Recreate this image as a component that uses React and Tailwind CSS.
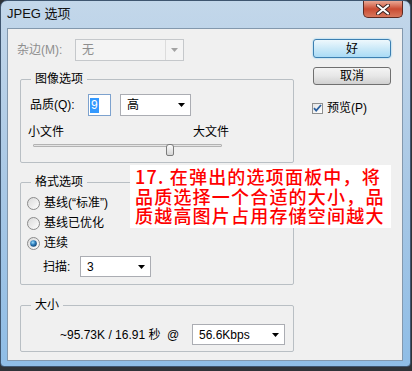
import React from 'react';

const ui = { fontFamily: '"Liberation Sans", "Noto Sans CJK SC", sans-serif' };
const cjk = { fontFamily: '"Noto Sans CJK SC", sans-serif' };

const Arrow = ({ disabled }) => (
  <svg width="7" height="4" viewBox="0 0 7 4">
    <path d="M0 0h7L3.5 4z" fill={disabled ? '#a3a3a3' : '#000'} />
  </svg>
);

// Vista style dropdown box
const Combo = ({ value, className = '', disabled }) => (
  <div
    className={`flex items-center h-full border ${
      disabled ? 'border-[#c5c8cb] bg-[#f4f4f4] text-[#8e8e8e]' : 'border-[#abadb3] bg-white text-black'
    } ${className}`}
  >
    <span className="flex-1 pl-[6px]">{value}</span>
    {disabled && <div className="h-full w-px bg-[#dcdcdc]" />}
    <div className="w-[17px] h-full flex items-center justify-center">
      <Arrow disabled={disabled} />
    </div>
  </div>
);

const Group = ({ title, className = '', children }) => (
  <div className={`border border-[#b9bfc4] rounded-[2px] ${className}`}>
    <div className="-mt-[9px] ml-[10px] w-fit px-[4px] bg-[#f0f0f0] leading-[16px]">{title}</div>
    {children}
  </div>
);

const Radio = ({ checked }) => (
  <svg width="13" height="13" viewBox="0 0 13 13">
    <defs>
      <linearGradient id="rbg" x1="0" y1="0" x2="1" y2="1">
        <stop offset="0" stopColor="#d8d8d8" />
        <stop offset="1" stopColor="#ffffff" />
      </linearGradient>
      <radialGradient id="rdot" cx="0.4" cy="0.35" r="0.7">
        <stop offset="0" stopColor="#9fe0ff" />
        <stop offset="0.5" stopColor="#2d7dbb" />
        <stop offset="1" stopColor="#10406e" />
      </radialGradient>
    </defs>
    <circle cx="6.5" cy="6.5" r="6" fill="url(#rbg)" stroke="#8b8b8b" strokeWidth="1" />
    {checked && <circle cx="6.5" cy="6.5" r="3.3" fill="url(#rdot)" />}
  </svg>
);

const RadioRow = ({ label, checked }) => (
  <div className="flex items-center h-[20px] pl-[6px] gap-[4px]">
    <Radio checked={checked} />
    <span>{label}</span>
  </div>
);

export default function App() {
  return (
    <div className="relative w-[412px] h-[371px] bg-[#2f3338] overflow-hidden text-[12px] text-black" style={ui}>
      <div className="w-[411px] h-[367px] flex flex-col border border-[#3f5670] rounded-t-[7px] rounded-b-[4px] bg-gradient-to-b from-[#c3d7ea] via-[#a9c8e5] to-[#8fbde6]">
        {/* title bar */}
        <div className="flex justify-between h-[27px]">
          <span className="pl-[6px] leading-[26px] text-[13px] text-[#111]">JPEG 选项</span>
          <div className="mr-[7px] w-[40px] h-[17px] rounded-b-[5px] border border-t-0 border-[#5c2a22] bg-gradient-to-b from-[#e9a895] via-[#c94b32] to-[#d8775c] flex items-center justify-center">
            <svg width="14" height="11" viewBox="0 0 14 11">
              <path d="M2 1.5l10 8M12 1.5l-10 8" stroke="#3a2220" strokeWidth="4" strokeLinecap="round" />
              <path d="M2 1.5l10 8M12 1.5l-10 8" stroke="#ffffff" strokeWidth="2.2" strokeLinecap="round" />
            </svg>
          </div>
        </div>

        {/* client area */}
        <div className="ml-[6px] w-[396px] h-[333px] border border-[#8398ad] bg-[#f0f0f0] flex items-start pt-[10px]">
          <div className="w-[274px] ml-[12px] flex flex-col">
            <div className="flex items-center h-[22px] -ml-[3px]">
              <span className="w-[58px] text-[#8e8e8e]">杂边(M):</span>
              <Combo className="w-[109px]" value="无" disabled />
            </div>

            <Group title="图像选项" className="mt-[18px] pb-[6px]">
              <div className="flex items-center h-[22px] mt-[7px] pl-[9px]">
                <span className="w-[58px]">品质(Q):</span>
                <div className="w-[23px] h-full border border-[#7da2ce] bg-white flex items-center pl-[1px]">
                  <span className="bg-[#3399ff] text-white px-[1px] leading-[15px]">9</span>
                </div>
                <Combo className="ml-[9px] w-[71px]" value="高" />
              </div>
              <div className="flex justify-between w-[201px] ml-[7px] mt-[8px] leading-[16px]">
                <span>小文件</span>
                <span>大文件</span>
              </div>
              <div className="relative ml-[12px] w-[189px] h-[12px]">
                <div className="mt-[4px] h-[3px] border border-[#b3b3b3] bg-[#e4e4e4] rounded-[1px]" />
                <div className="absolute left-[133px] top-0 w-[8px] h-[12px] rounded-t-[3px] rounded-b-[2px] border border-[#7c7c7c] bg-gradient-to-b from-[#fbfbfb] to-[#d6d6d6]" />
              </div>
            </Group>

            <Group title="格式选项" className="mt-[19px] pb-[7px]">
              <div className="mt-[3px]">
                <RadioRow label="基线(“标准”)" />
                <RadioRow label="基线已优化" />
                <RadioRow label="连续" checked />
              </div>
              <div className="flex items-center h-[21px] mt-[3px] pl-[22px]">
                <span className="w-[37px]">扫描:</span>
                <Combo className="w-[71px]" value="3" />
              </div>
            </Group>

            <Group title="大小" className="mt-[20px] pb-[6px]">
              <div className="flex items-center h-[21px] mt-[11px] pl-[39px]">
                <span className="w-[132px] whitespace-nowrap">~95.73K / 16.91 秒&nbsp; @</span>
                <Combo className="w-[93px]" value="56.6Kbps" />
              </div>
            </Group>
          </div>

          {/* right column */}
          <div className="ml-[19px] w-[78px] flex flex-col">
            <button className="h-[19px] rounded-[3px] border border-[#3c7fb1] bg-gradient-to-b from-[#eef8fd] via-[#cbe9f8] to-[#a9dbf6] shadow-[0_0_2px_#6fc9f4] leading-none">
              好
            </button>
            <button className="mt-[9px] h-[18px] rounded-[3px] border border-[#707070] bg-gradient-to-b from-[#f4f4f4] via-[#e7e7e7] to-[#d0d0d0] leading-none">
              取消
            </button>
            <div className="mt-[17px] -ml-[1px] flex items-center gap-[4px] h-[12px]">
              <div className="w-[11px] h-[11px] border border-[#8e8f8f] bg-gradient-to-br from-[#e6e6e6] to-white flex items-center justify-center">
                <svg width="9" height="8" viewBox="0 0 9 8">
                  <path d="M1 4.2l2.2 2.4L8 1" fill="none" stroke="#2a5f9e" strokeWidth="1.8" />
                </svg>
              </div>
              <span>预览(P)</span>
            </div>
          </div>
        </div>
      </div>

      {/* red annotation overlay */}
      <div
        className="absolute left-[130px] top-[165px] w-[261px] h-[63px] bg-white pl-[5px] pt-[2px] text-[18px] leading-[19.5px] font-medium text-[#ff0000] tracking-[1.2px] whitespace-nowrap"
        style={cjk}
      >
        <div>17. 在弹出的选项面板中，将</div>
        <div>品质选择一个合适的大小，品</div>
        <div>质越高图片占用存储空间越大</div>
      </div>
    </div>
  );
}
